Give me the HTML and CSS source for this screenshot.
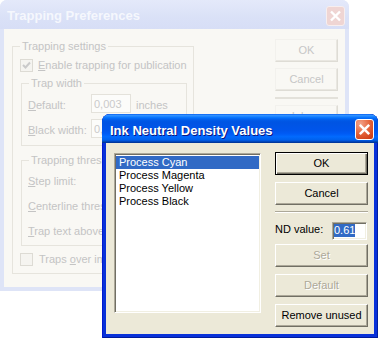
FILE: index.html
```html
<!DOCTYPE html>
<html>
<head>
<meta charset="utf-8">
<title>Ink Neutral Density Values</title>
<link rel="stylesheet" href="styles.css">
</head>
<body>
<div class="stage">
  <div class="bgwin">
    <div class="bg-title">
      <span class="bg-title-text">Trapping Preferences</span>
      <span class="bg-close"><svg width="17" height="18" viewBox="0 0 17 18"><path d="M4 4.5 L13 13.5 M13 4.5 L4 13.5" stroke="#ffffff" stroke-width="2.4"/></svg></span>
    </div>
    <div class="bg-client">
      <div class="grp g-outer">
        <div class="legend">Trapping settings</div>
        <div class="chkrow r-enable">
          <span class="chk"><svg width="11" height="11" viewBox="0 0 11 11"><path d="M2 5 L4.5 7.5 L9 2.5" fill="none" stroke="#cacaca" stroke-width="2"/></svg></span>
          <span><u>E</u>nable trapping for publication</span>
        </div>
        <div class="grp g-inner g-width">
          <div class="legend">Trap width</div>
          <div class="frow r-first">
            <span class="flabel"><u>D</u>efault:</span>
            <span class="fedit">0,003</span>
            <span class="funit">inches</span>
          </div>
          <div class="frow">
            <span class="flabel"><u>B</u>lack width:</span>
            <span class="fedit">0,003</span>
            <span class="funit">inches</span>
          </div>
        </div>
        <div class="grp g-inner g-thresh">
          <div class="legend">Trapping thresholds</div>
          <div class="frow r-first"><span class="flabel"><u>S</u>tep limit:</span></div>
          <div class="frow"><span class="flabel"><u>C</u>enterline threshold:</span></div>
          <div class="frow"><span class="flabel"><u>T</u>rap text above:</span></div>
        </div>
        <div class="chkrow r-over">
          <span class="chk"></span>
          <span>Traps <u>o</u>ver imported pictures</span>
        </div>
      </div>
      <div class="bg-btns">
        <div class="bg-btn">OK</div>
        <div class="bg-btn">Cancel</div>
        <div class="bg-sep"></div>
        <div class="bg-btn">Inks...</div>
      </div>
    </div>
  </div>

  <div class="dlg">
    <div class="dlg-title">
      <span class="dlg-title-text">Ink Neutral Density Values</span>
      <span class="xp-close"><svg width="17" height="19" viewBox="0 0 17 19"><path d="M3.8 4.8 L13.2 14.2 M13.2 4.8 L3.8 14.2" stroke="#ffffff" stroke-width="2.5"/></svg></span>
    </div>
    <div class="dlg-client">
      <div class="listbox">
        <div class="li sel">Process Cyan</div>
        <div class="li">Process Magenta</div>
        <div class="li">Process Yellow</div>
        <div class="li">Process Black</div>
      </div>
      <div class="side">
        <div class="btn btn-default">OK</div>
        <div class="btn btn-cancel">Cancel</div>
        <div class="sep"></div>
        <div class="ndrow">
          <span class="ndlabel">ND value:</span>
          <span class="edit"><span class="seltext">0.61</span></span>
        </div>
        <div class="btn btn-set disabled">Set</div>
        <div class="btn btn-gap disabled">Default</div>
        <div class="btn btn-gap">Remove unused</div>
      </div>
    </div>
  </div>
</div>
</body>
</html>
```

FILE: styles.css
```css
* { box-sizing: border-box; }

html, body {
  margin: 0;
  padding: 0;
  background: #ffffff;
}

body {
  font-family: "Liberation Sans", Arial, sans-serif;
  font-size: 11px;
  line-height: 13px;
  color: #000;
  width: 380px;
  height: 339px;
  overflow: hidden;
}

.stage {
  position: relative;
  width: 380px;
  height: 339px;
}

/* ---------- faded background window ---------- */
.bgwin {
  width: 349px;
  height: 291px;
  background: #dee4f7;
  border-radius: 7px 7px 0 0;
  display: flex;
  flex-direction: column;
  color: #c4c4c4;
}

.bg-title {
  height: 29px;
  flex: none;
  padding: 8px 4px 0 7px;
  display: flex;
  justify-content: space-between;
  align-items: flex-start;
  background: linear-gradient(#e4e9fa, #dae1f7 60%, #d7def6);
  border-radius: 7px 7px 0 0;
}

.bg-title-text {
  font-weight: bold;
  font-size: 13px;
  line-height: 15px;
  color: #f5f7fd;
}

.bg-close {
  width: 19px;
  height: 20px;
  margin-top: -2px;
  border: 1px solid #f7eeee;
  border-radius: 3px;
  background: #efd5d3;
  display: flex;
}

.bg-client {
  flex: 1;
  margin: 0 4px 4px;
  background: #f9f8f4;
  display: flex;
  align-items: flex-start;
}

.grp {
  display: flex;
  flex-direction: column;
  border: 1px solid #e6e4dd;
}

.legend {
  align-self: flex-start;
  margin: -7px 0 0 7px;
  padding: 0 2px;
  background: #f9f8f4;
  white-space: nowrap;
}

.g-outer {
  width: 182px;
  margin: 17px 0 0 8px;
  padding-bottom: 7px;
}

.chkrow {
  display: flex;
  align-items: flex-start;
  gap: 5px;
  padding-left: 7px;
  height: 13px;
  white-space: nowrap;
}

.r-enable { margin-top: 6px; }
.r-over { margin-top: 7px; gap: 6px; }

.chk {
  width: 13px;
  height: 13px;
  flex: none;
  border: 1px solid #dddbd4;
  background: #f5f4f0;
  display: flex;
}

.g-inner {
  width: 166px;
  margin-left: 8px;
}

.g-width {
  margin-top: 11px;
  padding-bottom: 7px;
}

.g-thresh {
  margin-top: 14px;
  padding-bottom: 6px;
}

.frow {
  display: flex;
  align-items: flex-start;
  height: 19px;
  padding-left: 6px;
  margin-top: 6px;
  white-space: nowrap;
}

.g-width .r-first { margin-top: 4px; }
.g-thresh .r-first { margin-top: 3px; }

.flabel {
  margin-top: 5px;
}

.g-width .flabel { width: 63px; flex: none; }

.fedit {
  width: 40px;
  height: 19px;
  flex: none;
  border: 1px solid #e4e2db;
  background: #fcfcfa;
  padding: 3px 0 0 2px;
  color: #cacaca;
}

.funit {
  margin: 5px 0 0 5px;
}

.bg-btns {
  width: 63px;
  margin: 10px 7px 0 auto;
  display: flex;
  flex-direction: column;
}

.bg-btn {
  height: 23px;
  display: flex;
  align-items: center;
  justify-content: center;
  border: 1px solid;
  border-color: #f2f1ed #dedcd5 #dedcd5 #f2f1ed;
  box-shadow: inset -1px -1px #e9e7e1;
  background: #f9f8f4;
  margin-bottom: 6px;
  color: #c6c6c6;
}

.bg-sep {
  height: 2px;
  background: #e3e1da;
  margin-bottom: 6px;
}

/* ---------- foreground dialog ---------- */
.dlg {
  position: absolute;
  left: 102px;
  top: 114px;
  width: 276px;
  height: 224px;
  background: #0831d9;
  border-radius: 8px 8px 0 0;
  box-shadow: inset 1px 0 #0019cf, inset -1px 0 #001ea0, inset 0 -1px #001a9a;
  display: flex;
  flex-direction: column;
}

.dlg-title {
  height: 29px;
  flex: none;
  padding: 9px 4px 0 8px;
  display: flex;
  justify-content: space-between;
  align-items: flex-start;
  border-radius: 8px 8px 0 0;
  background: linear-gradient(to bottom,
    #0058ee 0%, #3593ff 4%, #288eff 7%, #127dff 10%, #036ffc 14%,
    #0262ee 18%, #0057e5 24%, #0054e3 30%, #0055eb 56%, #005bf5 68%,
    #026afe 78%, #0062ef 88%, #0052d6 93%, #0040ab 96%, #003092 100%);
}

.dlg-title-text {
  font-weight: bold;
  font-size: 13px;
  line-height: 15px;
  color: #ffffff;
  text-shadow: 1px 1px #0a1883;
}

.xp-close {
  width: 19px;
  height: 21px;
  margin-top: -4px;
  border: 1px solid #ffffff;
  border-radius: 3px;
  background: radial-gradient(circle at 25% 20%, #f2a48c 0%, #e7683f 45%, #d4461e 80%, #c63e17 100%);
  display: flex;
}

.dlg-client {
  flex: 1;
  margin: 0 4px 4px;
  background: #ece9d8;
  padding: 9px 6px 0 8px;
  display: flex;
  align-items: flex-start;
  gap: 14px;
}

.listbox {
  width: 147px;
  height: 160px;
  flex: none;
  margin-top: 1px;
  background: #ffffff;
  border: 1px solid;
  border-color: #aca899 #ffffff #ffffff #aca899;
  box-shadow: inset 1px 1px #716f64, inset -1px -1px #f1efe2;
  padding: 2px 1px 0 1px;
}

.li {
  height: 13px;
  padding-left: 3px;
  white-space: nowrap;
}

.li.sel {
  background: #316ac5;
  color: #ffffff;
}

.side {
  width: 93px;
  flex: none;
  display: flex;
  flex-direction: column;
}

.btn {
  height: 23px;
  display: flex;
  align-items: center;
  justify-content: center;
  background: #ece9d8;
  border: 1px solid;
  border-color: #ffffff #716f64 #716f64 #ffffff;
  box-shadow: inset -1px -1px #aca899;
  white-space: nowrap;
}

.btn-default {
  border-color: #000000;
  box-shadow: inset 1px 1px #ffffff, inset -1px -1px #716f64, inset -2px -2px #aca899;
}

.btn-cancel { margin-top: 7px; }

.btn.disabled {
  color: #aca899;
  text-shadow: 1px 1px #ffffff;
}

.btn-set { margin-top: 4px; }
.btn-gap { margin-top: 7px; }

.sep {
  height: 2px;
  margin-top: 6px;
  border-top: 1px solid #aca899;
  border-bottom: 1px solid #ffffff;
}

.ndrow {
  margin-top: 9px;
  height: 18px;
  display: flex;
  align-items: flex-start;
  justify-content: space-between;
}

.ndlabel {
  margin-top: 1px;
}

.edit {
  width: 35px;
  height: 18px;
  margin-right: 1px;
  background: #ffffff;
  border: 1px solid;
  border-color: #aca899 #ffffff #ffffff #aca899;
  box-shadow: inset 1px 1px #716f64, inset -1px -1px #f1efe2;
  padding: 1px 0 0 1px;
  line-height: 13px;
}

.seltext {
  display: inline-block;
  background: #316ac5;
  color: #ffffff;
  padding: 0 0 0 0;
}
```
